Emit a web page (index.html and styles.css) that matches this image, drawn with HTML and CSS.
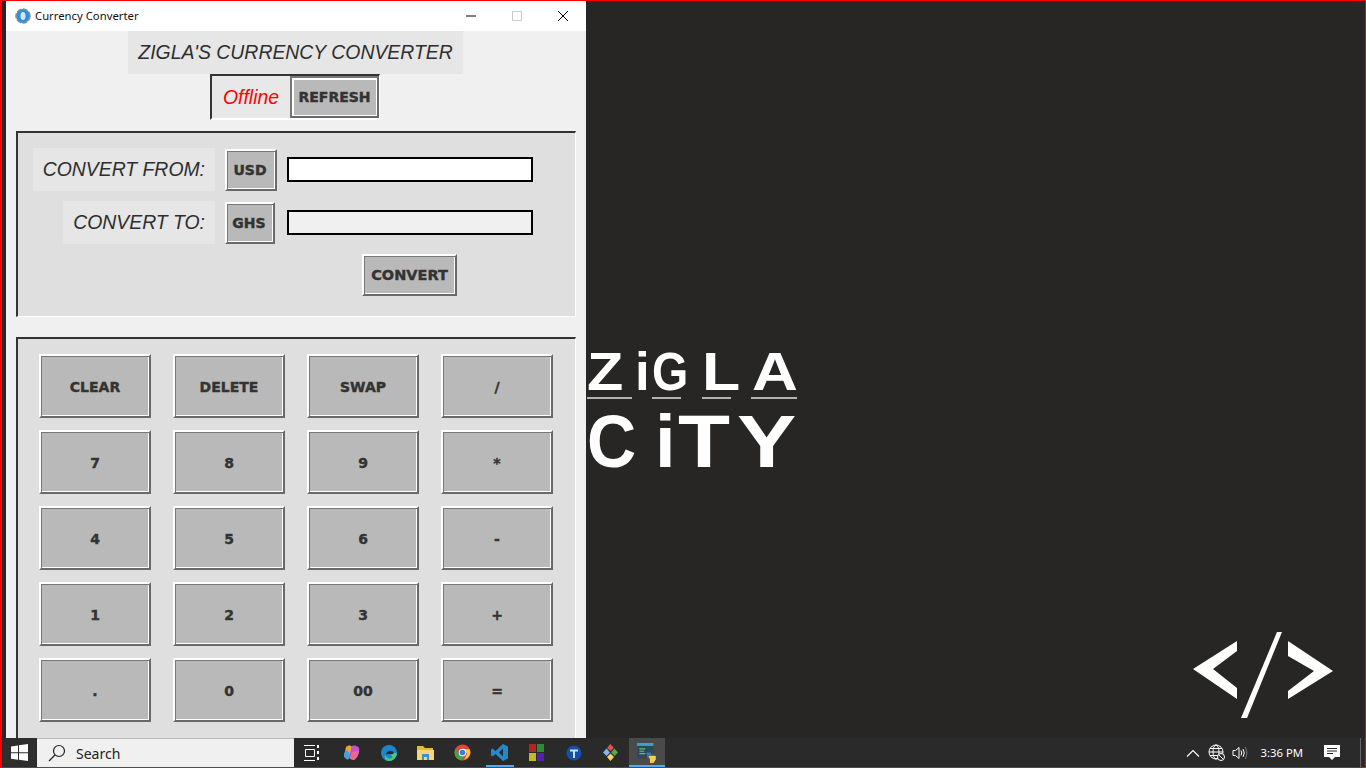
FILE: index.html
```html
<!doctype html>
<html lang="en">
    <head>
        <meta charset="utf8">
        <title>Currency Converter</title>
        <link rel="stylesheet" href="styles.css">
    </head>
    <body>
        <div class="screen">
            <div class="desktop">
                <div class="logo">
                    <div class="logo-word zigla"><span>Z</span><span>i</span><span>G</span><span>L</span><span>A</span></div>
                    <div class="logo-rule"><i></i><i></i><i></i><i></i></div>
                    <div class="logo-word city"><span>C</span><span>i</span><span>T</span><span>Y</span></div>
                </div>
                <svg class="code-mark" width="142" height="88" viewBox="1192 631 142 88">
                    <polygon fill="#fff" points="1193,669 1237,641 1237,651 1213,669 1237,688 1237,699"/>
                    <polygon fill="#fff" points="1277,632 1282,632 1247,718 1241,718"/>
                    <polygon fill="#fff" points="1288,641 1333,671 1288,699 1288,691 1314,671 1288,656"/>
                </svg>

                <main class="window">
                    <header class="title-bar">
                        <svg class="app-icon" width="16" height="16" viewBox="0 0 16 16">
                            <circle cx="8" cy="8" r="7" fill="#2f8fd8" stroke="#8a8f94" stroke-width="1.5" stroke-dasharray="5 1.5"/>
                            <ellipse cx="8" cy="8" rx="2.5" ry="4" fill="#cfe8fa"/>
                        </svg>
                        <span class="window-title">Currency Converter</span>
                        <div class="window-controls">
                            <svg width="46" height="30" viewBox="0 0 46 30"><path d="M18 15h10" stroke="#000"/></svg>
                            <svg width="46" height="30" viewBox="0 0 46 30"><rect x="18.5" y="10.5" width="9" height="9" fill="none" stroke="#ccc"/></svg>
                            <svg width="46" height="30" viewBox="0 0 46 30"><path d="M18 10l10 10M28 10l-10 10" stroke="#000"/></svg>
                        </div>
                    </header>
                    <div class="window-body">
                        <h1 class="app-heading">ZIGLA'S CURRENCY CONVERTER</h1>
                        <div class="status-box">
                            <span class="status-text">Offline</span>
                            <button class="btn refresh-btn">REFRESH</button>
                        </div>
                        <section class="panel convert-panel">
                            <label class="field-label">CONVERT FROM:</label>
                            <button class="btn code-btn">USD</button>
                            <input class="amount" type="text">
                            <label class="field-label to-label">CONVERT TO:</label>
                            <button class="btn code-btn ghs-btn">GHS</button>
                            <input class="amount amount-out" type="text">
                            <button class="btn convert-btn">CONVERT</button>
                        </section>
                        <section class="panel keypad">
                            <button class="btn key">CLEAR</button>
                            <button class="btn key">DELETE</button>
                            <button class="btn key">SWAP</button>
                            <button class="btn key">/</button>
                            <button class="btn key">7</button>
                            <button class="btn key">8</button>
                            <button class="btn key">9</button>
                            <button class="btn key">*</button>
                            <button class="btn key">4</button>
                            <button class="btn key">5</button>
                            <button class="btn key">6</button>
                            <button class="btn key">-</button>
                            <button class="btn key">1</button>
                            <button class="btn key">2</button>
                            <button class="btn key">3</button>
                            <button class="btn key">+</button>
                            <button class="btn key">.</button>
                            <button class="btn key">0</button>
                            <button class="btn key">00</button>
                            <button class="btn key">=</button>
                        </section>
                    </div>
                </main>
            </div>

            <footer class="taskbar">
                <div class="start">
                    <svg width="17" height="17" viewBox="0 0 17 17"><path fill="#fff" d="M0 2.5l7-1v6.7H0zM8 1.3L17 0v8.200H8zM0 9.200h7v6.500l-7-1zM8 9.200h9V17l-9-1.300z"/></svg>
                </div>
                <div class="search-box">
                    <svg width="18" height="18" viewBox="0 0 18 18"><circle cx="11" cy="7" r="5.500" fill="none" stroke="#222" stroke-width="1.200"/><path d="M7 11l-6 6" stroke="#222" stroke-width="1.300"/></svg>
                    <span>Search</span>
                </div>
                <div class="task-icons">
                    <div class="task-item wide-view">
                        <svg width="16" height="16" viewBox="0 0 16 16"><path fill="none" stroke="#fff" d="M0 .5h11M1.500 4.500h9v7h-9zM0 15.500h11"/><path stroke="#fff" stroke-width="2" d="M14 0v3M14 6v3M14 12v3"/></svg>
                    </div>
                    <div class="task-item">
                        <svg width="18" height="18" viewBox="0 0 18 18"><path fill="#f0a03c" d="M3 3c2-2 5-2 6 0l-2 8c-1 3-5 4-6 1z"/><path fill="#3fa3e0" d="M1 12c0-3 1-5 3-6l3 4-1 5c-2 1-4 0-5-3z"/><path fill="#c74fd0" d="M9 2c3-1 6 0 7 2 1 4-1 10-5 12-2 0-4-1-5-2z"/><path fill="#e86a8a" d="M9 8c2-1 5-1 7-1-1 4-3 8-5 9-2 0-3-1-4-2z"/></svg>
                    </div>
                    <div class="task-item">
                        <svg width="18" height="18" viewBox="0 0 18 18"><circle cx="9" cy="9" r="8" fill="#1a86d0"/><path fill="#4ecb71" d="M17 10c-1 4-4 7-8 7-3 0-5-3-4-6 1 3 5 4 7 3 1-1 0-2-1-3 2-2 5-3 6-1z"/><path fill="#2a2a2a" d="M6 11c0-3 3-5 6-4 2 1 2 2 1 3H9c-1 0-3 0-3 1z"/></svg>
                    </div>
                    <div class="task-item">
                        <svg width="17" height="16" viewBox="0 0 17 16"><path fill="#e8b93c" d="M0 1h6l2 2h8v3H0z"/><path fill="#f7d774" d="M0 5h17v10H0z"/><path fill="#3d8fd1" d="M5 9h7v6h-2v-3H7v3H5z"/></svg>
                    </div>
                    <div class="task-item">
                        <svg width="17" height="17" viewBox="0 0 18 18"><circle cx="9" cy="9" r="8.500" fill="#e0463a"/><path fill="#f8c93a" d="M9 5.500h7.700a8.500 8.500 0 0 1-6 11.300L14 10z"/><path fill="#3aa655" d="M1.800 4.500L5.500 11 10.500 13l-2.500 4.400A8.500 8.500 0 0 1 1.800 4.500z"/><circle cx="9" cy="9" r="4" fill="#fff"/><circle cx="9" cy="9" r="3" fill="#3b7ddd"/></svg>
                    </div>
                    <div class="task-item running">
                        <svg width="17" height="17" viewBox="0 0 17 17"><path fill="#2489ca" d="M12 0l5 2.500v12L12 17 4.500 10 1.500 12.500 0 11.500V5.500l1.500-1L4.500 7zM12 4.500L8 8.500l4 4z"/></svg>
                    </div>
                    <div class="task-item">
                        <div class="tiles"><i></i><i></i><i></i><i></i></div>
                    </div>
                    <div class="task-item">
                        <svg width="16" height="16" viewBox="0 0 16 16"><circle cx="8" cy="8" r="7.500" fill="#1450a8"/><path fill="#cfe0f5" d="M4 4.500h8v2H9v6.500H7V6.500H4z"/></svg>
                    </div>
                    <div class="task-item">
                        <svg width="17" height="17" viewBox="0 0 17 17"><path fill="#e0524a" d="M8.500 0L12 4l-3.500 3L5 4z" transform="rotate(-5 8 4)"/><path fill="#8ab4f0" d="M4.500 4.500L8 8.500 4.500 12 1 8.500z"/><path fill="#55a84f" d="M12.500 4.500L16 8.500 12.500 12 9 8.500z"/><path fill="#f2d768" d="M8.500 9.500L12 13l-3.500 4L5 13z"/></svg>
                    </div>
                    <div class="task-item active">
                        <svg width="17" height="17" viewBox="0 0 17 17"><rect width="14" height="13" fill="#2c4a5e"/><rect width="14" height="2.500" fill="#3d9bd6"/><path stroke="#5fc45f" d="M2 5h5M2 7h4M2 9h5"/><path fill="#3b78a8" d="M8 8h4v2h3v3H9z"/><path fill="#f5cf4d" d="M10 11h6v3l-2 3h-3v-3z"/></svg>
                    </div>
                </div>
                <div class="tray">
                    <svg width="14" height="8" viewBox="0 0 14 8"><path d="M1 7.500l6-6 6 6" fill="none" stroke="#fff" stroke-width="1.100"/></svg>
                    <svg class="tray-globe" width="17" height="17" viewBox="0 0 17 17"><g fill="none" stroke="#fff"><circle cx="8" cy="8" r="7"/><ellipse cx="8" cy="8" rx="3" ry="7"/><path d="M1 8h14M2 4.500h12M2 11.500h12"/></g><circle cx="13" cy="13" r="3.500" fill="#272727" stroke="#fff"/><path d="M11 11l4 4" stroke="#fff"/></svg>
                    <svg class="tray-sound" width="16" height="14" viewBox="0 0 16 14"><path d="M1 4.500h2.500L7 1.500v11l-3.500-3H1z" fill="none" stroke="#fff"/><path d="M9 4.500q1.500 2.500 0 5M11 3q2.500 4 0 8" fill="none" stroke="#fff"/><path d="M13.500 1q3 6 0 12" fill="none" stroke="#777"/></svg>
                    <span class="clock">3:36 PM</span>
                    <svg class="tray-note" width="16" height="15" viewBox="0 0 16 15"><path fill="#fff" d="M0 0h16v12h-5l-3 3-3-3H0z"/><path stroke="#272727" d="M3 3.500h10M3 6h10M3 8.500h6"/></svg>
                    <div class="show-desktop"></div>
                </div>
            </footer>
        </div>
    </body>
</html>
```

FILE: styles.css
```css
html, body {
    margin: 0;
    padding: 0;
    overflow: hidden;
}
* {
    box-sizing: border-box;
}
.screen {
    background: #272625;
    border: 1px solid #f00;
    border-left-width: 2px;
    display: flex;
    flex-direction: column;
    height: 768px;
    width: 1366px;
}
.desktop {
    flex: 1;
    min-height: 0;
    padding-left: 4px;
    position: relative;
}

/* desktop wallpaper marks */
.logo {
    color: #fff;
    font-family: "Liberation Sans", Arial, sans-serif;
    font-weight: 700;
    left: 585px;
    position: absolute;
    top: 351px;
    width: 210px;
}
.logo-word {
    display: grid;
}
.logo-word span {
    transform-origin: left bottom;
}
.zigla {
    font-size: 53px;
    grid-template-columns: 48px 17px 50px 50px 45px;
    height: 40px;
    line-height: 40px;
}
.zigla span:nth-child(1) {
    transform: scaleX(1.12);
}
.zigla span:nth-child(3) {
    transform: scaleX(.88);
}
.zigla span:nth-child(4) {
    transform: scaleX(1.18);
}
.zigla span:nth-child(5) {
    transform: scaleX(1.2);
}
.city {
    font-size: 74px;
    grid-template-columns: 68px 23px 59px 60px;
    height: 62px;
    line-height: 62px;
    margin-top: 12px;
}
.city span:nth-child(1) {
    transform: scaleX(.92);
}
.city span:nth-child(3) {
    transform: scaleX(1.15);
}
.city span:nth-child(4) {
    transform: scaleX(1.2);
}
.logo-rule {
    display: flex;
    justify-content: space-between;
    margin-top: 5px;
}
.logo-rule i {
    background: #b5b3b0;
    height: 2px;
    width: 29px;
}
.logo-rule i:first-child {
    width: 45px;
}
.logo-rule i:last-child {
    width: 46px;
}
.code-mark {
    left: 1190px;
    position: absolute;
    top: 630px;
}

/* app window */
.window {
    background: #f0f0f0;
    display: flex;
    flex-direction: column;
    font-family: "Liberation Sans", Arial, sans-serif;
    height: 737px;
    overflow: hidden;
    position: relative;
    width: 580px;
}
.title-bar {
    align-items: center;
    background: #fff;
    display: flex;
    flex: none;
    height: 30px;
    padding-bottom: 1px;
    padding-left: 9px;
}
.window-title {
    color: #111;
    font-family: "Noto Sans", sans-serif;
    font-size: 11.300px;
    margin-left: 4px;
}
.window-controls {
    display: flex;
    margin-left: auto;
}
.window-body {
    align-items: center;
    display: flex;
    flex-direction: column;
}
.app-heading {
    background: #e6e6e6;
    color: #2e2e2e;
    font-size: 19.400px;
    font-style: italic;
    font-weight: 400;
    height: 43px;
    line-height: 43px;
    margin: 0 1px 0 0;
    text-align: center;
    width: 335px;
}
.status-box {
    align-items: center;
    background: #e8e8e8;
    border: solid;
    border-color: #333 #fff #fff #333;
    border-width: 2px 1px 2px 2px;
    display: flex;
    height: 46px;
    justify-content: space-between;
    margin-right: 2px;
    padding-left: 11px;
    width: 170px;
}
.status-text {
    color: #f00;
    font-size: 19.400px;
    font-style: italic;
}

/* tk style raised button */
.btn {
    -webkit-text-stroke: .4px #333;
    background: #b9b9b9;
    border: 2px solid;
    border-color: #fff #696969 #696969 #fff;
    border-radius: 0;
    box-shadow: inset 1px 1px 0 #777, inset -1px -1px 0 #fff;
    color: #333;
    font-family: "DejaVu Sans", sans-serif;
    font-size: 14px;
    font-weight: 700;
    padding: 2px 0 0;
}
.refresh-btn {
    border-color: #777 #696969 #696969 #777;
    box-shadow: inset 2px 2px 0 #fff, inset -1px -1px 0 #fff;
    height: 42px;
    padding: 0;
    width: 89px;
}
.panel {
    background: #dfdfdf;
    border: solid;
    border-color: #333 #fff #fff #333;
    border-width: 2px 1px 1px 2px;
    width: 560px;
}
.convert-panel {
    align-items: center;
    display: grid;
    gap: 10px;
    grid-template-columns: 197px 52px 246px;
    grid-template-rows: 43px 43px 42px;
    height: 186px;
    margin-top: 11px;
    padding-top: 15px;
}
.field-label {
    background: #e6e6e6;
    color: #2e2e2e;
    font-size: 19.400px;
    font-style: italic;
    height: 43px;
    justify-self: end;
    line-height: 43px;
    padding: 0 10px;
    text-align: right;
}
.code-btn {
    height: 42px;
    padding: 0 2px 0 0;
    width: 52px;
}
.ghs-btn {
    width: 50px;
}
.amount {
    background: #fff;
    border: 2px solid #000;
    height: 25px;
    margin: 0 0 0 0;
    outline: none;
    width: 246px;
}
.amount-out {
    background: #f0f0f0;
}
.convert-btn {
    font-size: 14.500px;
    grid-column: 3;
    height: 42px;
    margin-left: 75px;
    padding: 0;
    width: 95px;
}
.keypad {
    display: grid;
    gap: 12px 22px;
    grid-auto-rows: 64px;
    grid-template-columns: repeat(4, 112px);
    height: 420px;
    margin-top: 20px;
    padding: 15px 0 0 21px;
}

/* windows taskbar */
.taskbar {
    align-items: stretch;
    background: #2a2a2a;
    display: flex;
    flex: none;
    height: 29px;
}
.start {
    align-items: center;
    background: #2e2e2e;
    display: flex;
    justify-content: center;
    width: 34px;
}
.search-box {
    align-items: center;
    background: #f0f0f0;
    border-top: 1px solid #bbb;
    color: #222;
    display: flex;
    font-family: "Noto Sans", sans-serif;
    font-size: 14px;
    gap: 10px;
    margin-left: 1px;
    padding-left: 11px;
    width: 257px;
}
.task-icons {
    display: flex;
}
.task-item {
    align-items: center;
    display: flex;
    height: 29px;
    justify-content: center;
    width: 37px;
}
.wide-view {
    width: 36px;
}
.task-item:nth-child(2) {
    margin-left: 3px;
}
.running {
    background: linear-gradient(#0000 27px, #5aa9e6 27px) no-repeat center / 28px 100%;
}
.active {
    background: linear-gradient(#4a4a4a 27px, #5aa9e6 27px);
    width: 36px;
}
.active svg {
    height: 20px;
    width: 20px;
}
.tiles {
    display: grid;
    gap: 1px;
    grid-template-columns: 7px 7px;
}
.tiles i {
    background: #b3261e;
    height: 8px;
}
.tiles i:nth-child(2) {
    background: #2e8b2e;
}
.tiles i:nth-child(3) {
    background: #c2b82e;
}
.tiles i:nth-child(4) {
    background: #5a1fa8;
}
.tray {
    align-items: center;
    display: flex;
    margin-left: auto;
    padding-right: 4px;
}
.tray-globe {
    margin-left: 8px;
}
.tray-sound {
    margin-left: 7px;
}
.clock {
    color: #fff;
    font-family: "Noto Sans", sans-serif;
    font-size: 11.300px;
    margin-left: 13px;
}
.tray-note {
    margin-left: 21px;
}
.show-desktop {
    background: #666;
    height: 29px;
    margin-left: 20px;
    width: 1px;
}
```
